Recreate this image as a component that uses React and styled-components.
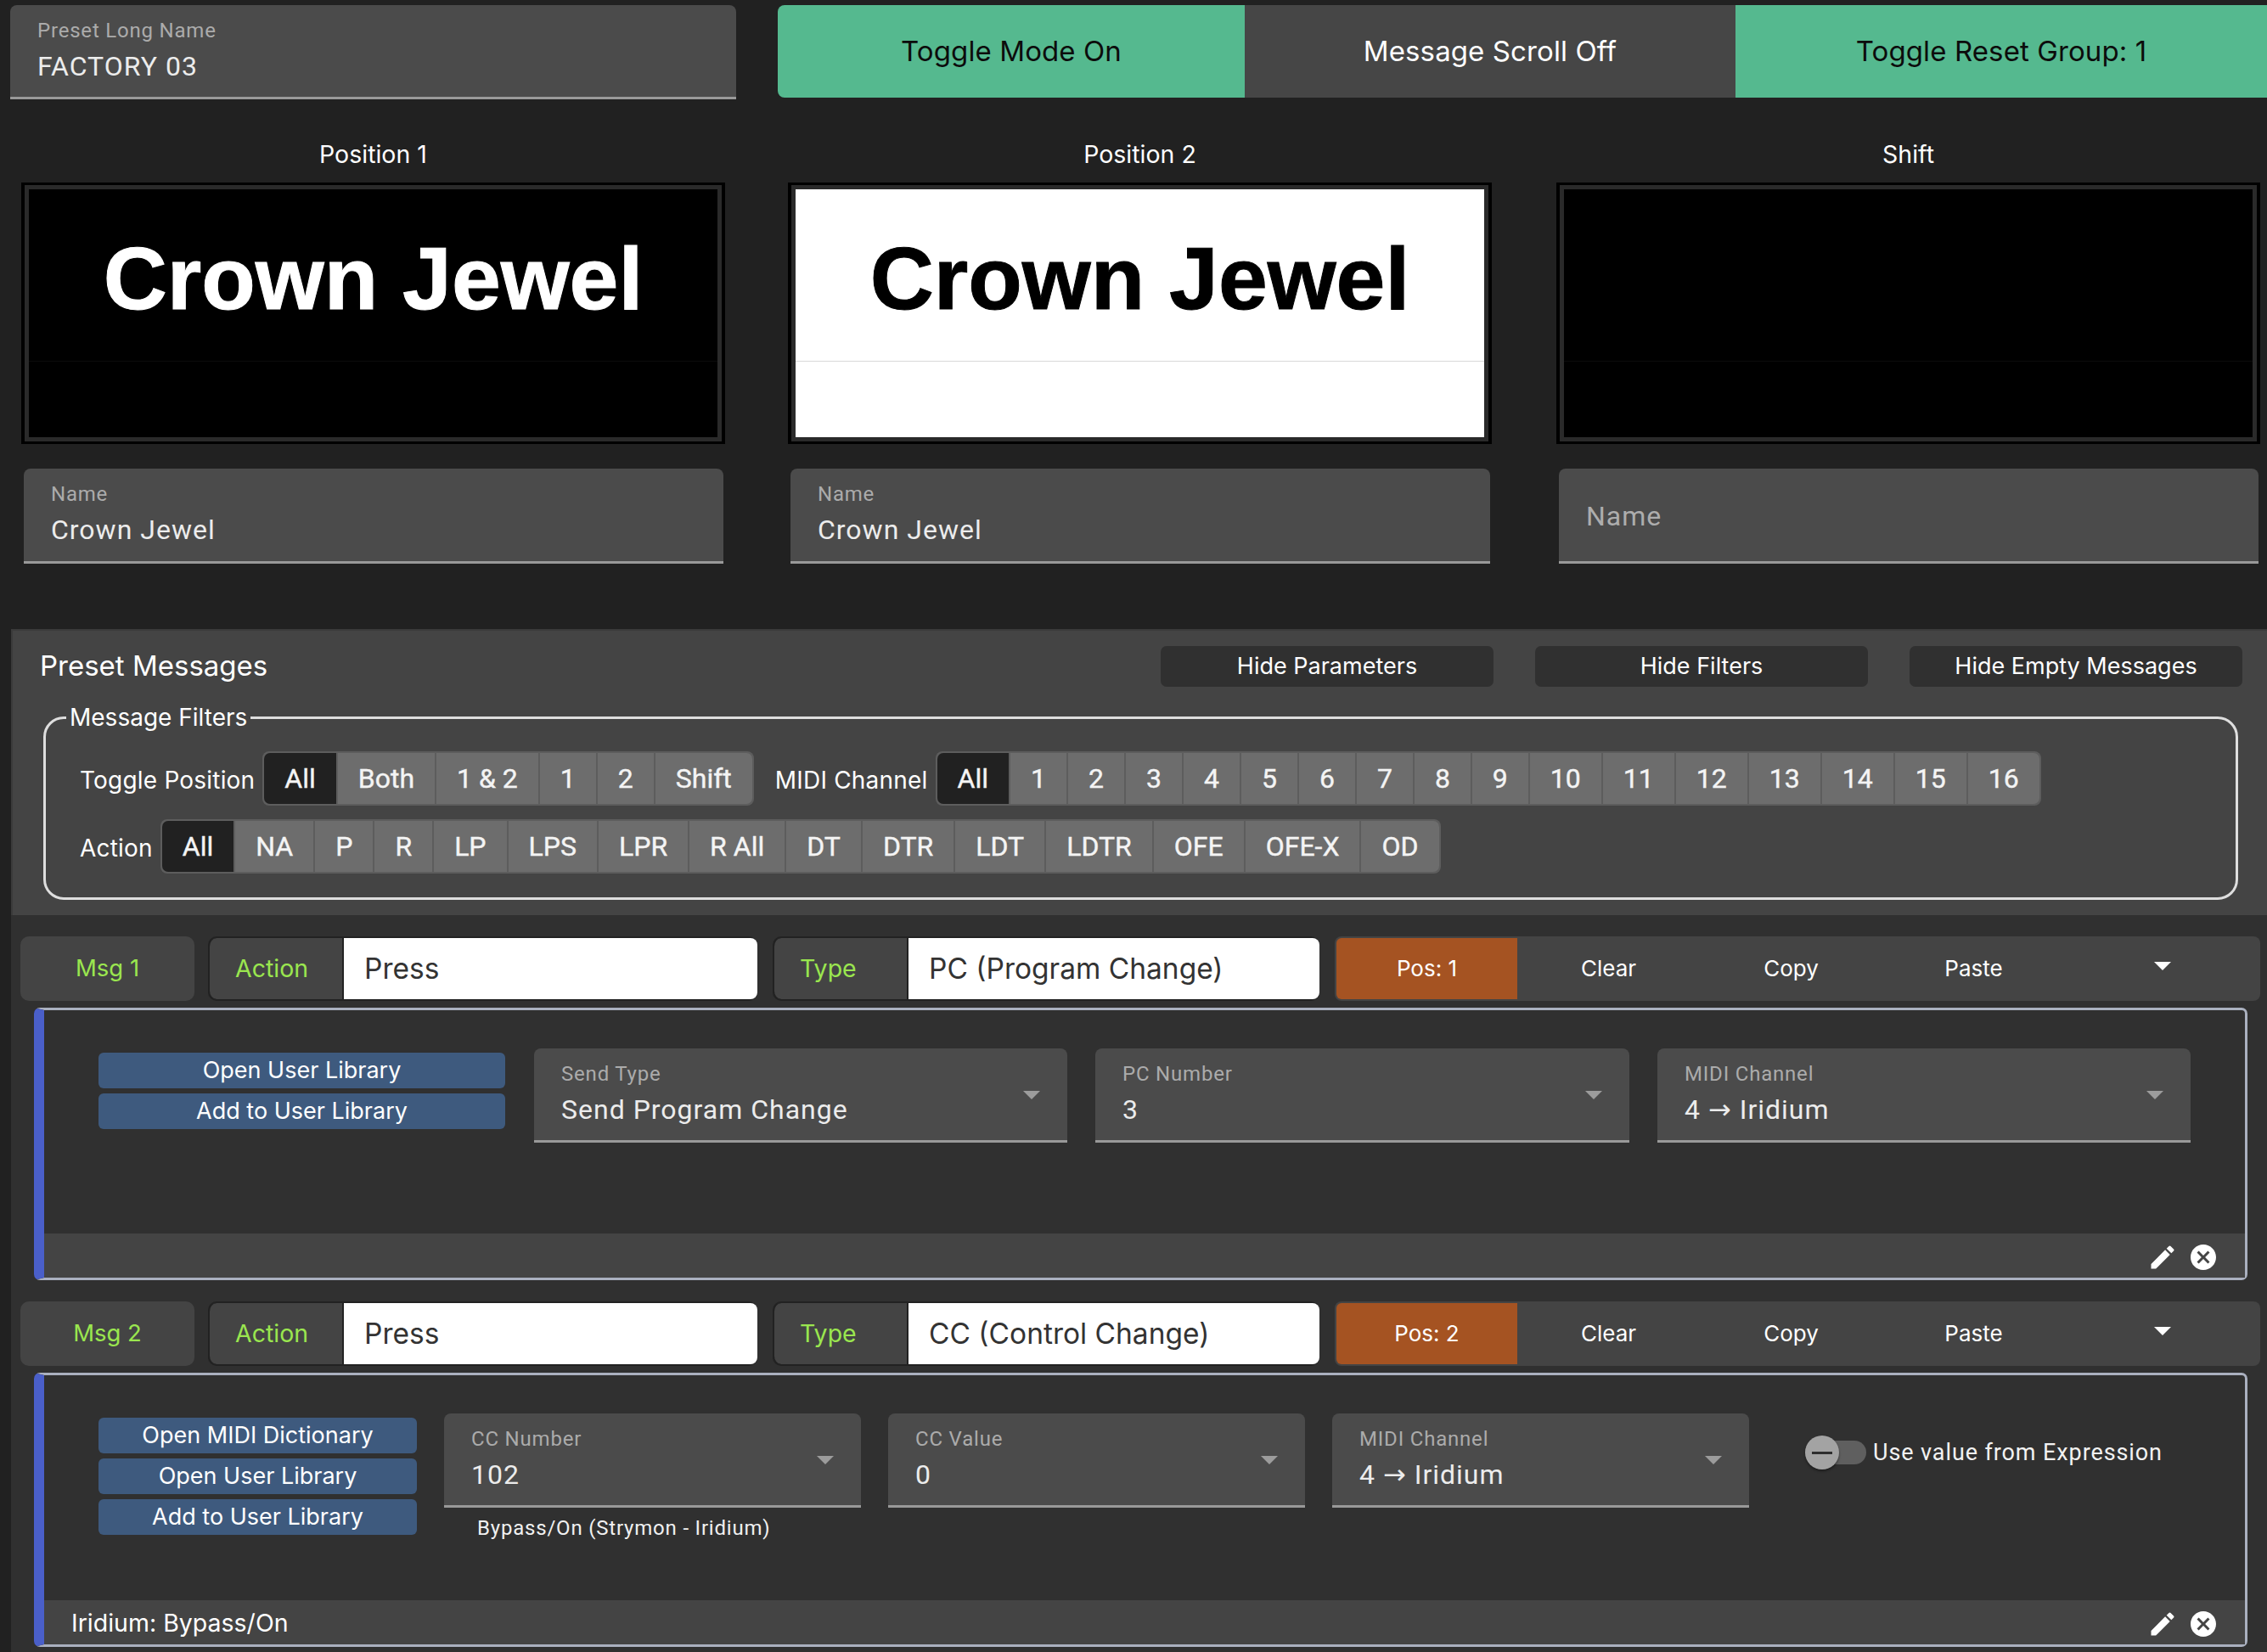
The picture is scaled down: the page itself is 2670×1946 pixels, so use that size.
import React from 'react';
import styled, { createGlobalStyle } from 'styled-components';

const GlobalStyle = createGlobalStyle`
  html, body {
    margin: 0;
    padding: 0;
    background: #212121;
  }
  * {
    box-sizing: border-box;
  }
`;

const uiFont = `Inter, "Liberation Sans", sans-serif`;
const fieldFont = `Roboto, "DejaVu Sans", sans-serif`;

const Page = styled.div`
  width: 2670px;
  height: 1946px;
  overflow: hidden;
  background: #212121;
  color: #fff;
  font-family: ${uiFont};
`;

const TopRow = styled.div`
  display: flex;
  padding: 6px 0 0 12px;
  gap: 49px;
`;

const Modes = styled.div`
  display: flex;
`;

const ModeButton = styled.div`
  display: flex;
  align-items: center;
  justify-content: center;
  width: ${p => p.$w}px;
  height: 109px;
  padding-bottom: 2px;
  font-size: 33px;
  letter-spacing: 0.1px;
  background: ${p => (p.$on ? '#55b98f' : '#464646')};
  color: ${p => (p.$on ? '#0c0c0c' : '#fff')};
  border-radius: ${p => (p.$first ? '8px 0 0 8px' : '0')};
`;

const Field = styled.div`
  display: flex;
  align-items: flex-start;
  justify-content: space-between;
  width: ${p => p.$w}px;
  height: ${p => p.$h || 111}px;
  padding: 16px 32px 0 32px;
  background: #4b4b4b;
  border-bottom: 3px solid #999;
  border-radius: 8px 8px 0 0;
  font-family: ${fieldFont};
`;

const FieldText = styled.div`
  display: flex;
  flex-direction: column;
  gap: 9px;
`;

const FieldLabel = styled.div`
  font-size: 24px;
  line-height: 28px;
  letter-spacing: 0.8px;
  color: #ababab;
`;

const FieldValue = styled.div`
  font-size: 32px;
  line-height: 38px;
  letter-spacing: 1px;
  color: #ececec;
`;

const Placeholder = styled.div`
  font-size: 32px;
  line-height: 38px;
  letter-spacing: 1px;
  color: #adadad;
  margin-top: 21px;
`;

const Caret = styled.span`
  width: 0;
  height: 0;
  margin: ${p => (p.$flat ? '0' : '34px 0 0 0')};
  border-left: 10px solid transparent;
  border-right: 10px solid transparent;
  border-top: 10px solid ${p => p.$color || '#9c9c9c'};
`;

const Displays = styled.div`
  display: grid;
  grid-template-columns: 903px 905px 829px;
  padding: 0 0 0 25px;
  margin-top: 49px;
`;

const DisplayCol = styled.div`
  display: flex;
  flex-direction: column;
  width: 829px;
`;

const DisplayTitle = styled.div`
  height: 32px;
  line-height: 32px;
  text-align: center;
  font-size: 28.5px;
  margin-bottom: 17px;
`;

const Screen = styled.div`
  height: 308px;
  padding: 5px;
  background: #2a2a2a;
  border-style: solid;
  border-color: #000;
  border-width: 3px 4px;
`;

const ScreenFace = styled.div`
  display: flex;
  flex-direction: column;
  height: 100%;
  background: ${p => (p.$light ? '#fff' : '#000')};
  color: ${p => (p.$light ? '#000' : '#fff')};
`;

const ScreenTop = styled.div`
  height: 203px;
  padding-top: 46px;
  text-align: center;
  font-family: "Liberation Sans", Arial, sans-serif;
  font-weight: 700;
  font-size: 104px;
  line-height: 118px;
  -webkit-text-stroke: 1px currentColor;
  border-bottom: 1px solid ${p => (p.$light ? '#d8d8d8' : '#0c0c0c')};
`;

const NameSlot = styled.div`
  padding: 29px 2px 0 3px;
`;

const Panel = styled.section`
  margin: 77px 0 0 13px;
  height: 337px;
  background: #444;
  border-top: 2px solid #3b3b3b;
  border-left: 2px solid #3b3b3b;
`;

const PanelHeader = styled.div`
  display: flex;
  align-items: center;
  height: 48px;
  margin-top: 18px;
  padding: 0 29px 0 32px;
`;

const PanelTitle = styled.div`
  font-size: 33px;
  margin: 0 auto 2px 0;
`;

const HideButton = styled.div`
  display: flex;
  align-items: center;
  justify-content: center;
  width: 392px;
  height: 48px;
  margin-left: 49px;
  padding-bottom: 2px;
  background: #303030;
  border-radius: 7px;
  font-size: 27px;
`;

const FilterBox = styled.fieldset`
  display: block;
  height: 232px;
  margin: 19px 34px 0 36px;
  padding: 23px 0 0 24px;
  border: 3px solid #dedede;
  border-radius: 24px;
`;

const FilterLegend = styled.legend`
  padding: 0 4px;
  height: 34px;
  line-height: 34px;
  font-size: 28px;
`;

const FilterRows = styled.div`
  display: flex;
  flex-direction: column;
  gap: 16px;
  padding-left: 16px;
`;

const FilterRow = styled.div`
  display: flex;
  align-items: center;
  height: 64px;
`;

const FilterLabel = styled.span`
  font-size: 28px;
  letter-spacing: 0.2px;
  margin: 4px 9px 0 ${p => p.$ml || 0}px;
  white-space: nowrap;
`;

const Group = styled.div`
  display: flex;
  height: 64px;
  padding: 2px;
  background: #5d5d5d;
  border-radius: 8px;
`;

const GroupButton = styled.div`
  display: flex;
  align-items: center;
  justify-content: center;
  padding: 0 24px;
  margin-left: ${p => (p.$first ? 0 : 2)}px;
  background: ${p => (p.$active ? '#212121' : '#6d6d6d')};
  border-radius: ${p => (p.$first ? '7px 0 0 7px' : p.$last ? '0 7px 7px 0' : '0')};
  font-family: ${fieldFont};
  font-size: 32px;
  font-weight: 400;
  -webkit-text-stroke: 0.4px currentColor;
  color: #f4f4f4;
  white-space: nowrap;
`;

const Messages = styled.div`
  margin-left: 13px;
  height: 868px;
  background: #303030;
  padding: 25px 0 0 11px;
`;

const MsgRow = styled.div`
  display: flex;
  height: 76px;
  margin-bottom: 8px;
`;

const MsgTag = styled.div`
  display: flex;
  align-items: center;
  justify-content: center;
  width: 205px;
  margin-right: 16px;
  padding-bottom: 2px;
  background: #444;
  border-radius: 10px;
  color: #9ae64f;
  font-size: 27.5px;
`;

const PickGroup = styled.div`
  display: flex;
  width: ${p => p.$w}px;
  margin-right: 18px;
  background: #222;
  padding: 2px 0;
  border-radius: 10px;
`;

const PickLabel = styled.div`
  display: flex;
  align-items: center;
  width: 160px;
  padding: 0 0 2px 30px;
  background: #444;
  border: 2px solid #222;
  border-width: 0 2px;
  border-radius: 10px 0 0 10px;
  color: #9ae64f;
  font-size: 28.5px;
`;

const PickValue = styled.div`
  display: flex;
  align-items: center;
  flex: 1;
  padding-left: 24px;
  background: #fff;
  border-radius: 0 8px 8px 0;
  color: #333;
  font-family: ${uiFont};
  font-size: 33.5px;
`;

const Toolbar = styled.div`
  display: flex;
  align-items: stretch;
  width: 1090px;
  padding: 2px 0 2px 2px;
  background: #444;
  border-radius: 8px;
`;

const PosTag = styled.div`
  display: flex;
  align-items: center;
  justify-content: center;
  width: 213px;
  padding-bottom: 2px;
  background: #a55322;
  border-radius: 6px 0 0 6px;
  font-size: 26px;
`;

const ToolButton = styled.div`
  display: flex;
  align-items: center;
  justify-content: center;
  width: 215px;
  padding-bottom: 2px;
  font-size: 26px;
`;

const ToolCaret = styled.div`
  display: flex;
  align-items: center;
  justify-content: center;
  flex: 1;
  padding-bottom: 6px;
`;

const Card = styled.div`
  display: flex;
  flex-direction: column;
  width: 2607px;
  height: ${p => p.$h}px;
  margin: 0 0 25px 16px;
  border: 3px solid #aab0bf;
  border-left: 12px solid #4a5fc9;
  border-radius: 7px;
`;

const CardBody = styled.div`
  display: flex;
  align-items: flex-start;
  flex: 1;
  padding: 45px 0 0 64px;
`;

const LibraryButtons = styled.div`
  display: flex;
  flex-direction: column;
  gap: 6px;
  width: ${p => p.$w}px;
  margin: 5px ${p => p.$gap}px 0 0;
`;

const LibraryButton = styled.div`
  display: flex;
  align-items: center;
  justify-content: center;
  height: 42px;
  padding-bottom: 2px;
  background: #3e5a7e;
  border-radius: 6px;
  font-size: 27px;
`;

const Fields = styled.div`
  display: flex;
  gap: ${p => p.$gap}px;
`;

const FieldCol = styled.div`
  display: flex;
  flex-direction: column;
`;

const Caption = styled.div`
  padding: 10px 0 0 39px;
  font-family: ${fieldFont};
  font-size: 24px;
  line-height: 28px;
  letter-spacing: 0.8px;
  color: #f0f0f0;
`;

const ExpressionToggle = styled.div`
  display: flex;
  align-items: center;
  margin: 30px 0 0 66px;
`;

const ToggleTrack = styled.div`
  position: relative;
  width: 72px;
  height: 28px;
  background: #5f5f5f;
  border-radius: 14px;
  margin-right: 8px;
`;

const ToggleKnob = styled.div`
  position: absolute;
  top: -6px;
  left: 0;
  display: flex;
  align-items: center;
  justify-content: center;
  width: 40px;
  height: 40px;
  background: #a3a3a3;
  border-radius: 50%;
  box-shadow: 0 2px 3px rgba(0, 0, 0, 0.4);

  &::after {
    content: '';
    width: 24px;
    height: 3px;
    background: #2e2e2e;
  }
`;

const ToggleLabel = styled.span`
  font-family: ${fieldFont};
  font-size: 27px;
  letter-spacing: 0.9px;
  color: #f2f2f2;
`;

const CardFooter = styled.div`
  display: flex;
  align-items: center;
  height: 52px;
  padding: 3px 31px 0 32px;
  background: #444;
`;

const FooterText = styled.span`
  font-size: 28.5px;
  margin: 0 auto 2px 0;
`;

const FooterIcon = styled.svg`
  width: 36px;
  height: 36px;
  margin-left: 12px;
  fill: #fff;
`;

const positionFilters = ['All', 'Both', '1 & 2', '1', '2', 'Shift'];
const channelFilters = ['All', ...Array.from({ length: 16 }, (_, i) => String(i + 1))];
const actionFilters = ['All', 'NA', 'P', 'R', 'LP', 'LPS', 'LPR', 'R All', 'DT', 'DTR', 'LDT', 'LDTR', 'OFE', 'OFE-X', 'OD'];

function FilterGroup({ options }) {
  return (
    <Group>
      {options.map((option, i) => (
        <GroupButton key={option} $first={i === 0} $last={i === options.length - 1} $active={i === 0}>
          {option}
        </GroupButton>
      ))}
    </Group>
  );
}

function SelectField({ label, value, w }) {
  return (
    <Field $w={w}>
      <FieldText>
        <FieldLabel>{label}</FieldLabel>
        <FieldValue>{value}</FieldValue>
      </FieldText>
      <Caret />
    </Field>
  );
}

function DisplayColumn({ title, name, light }) {
  return (
    <DisplayCol>
      <DisplayTitle>{title}</DisplayTitle>
      <Screen>
        <ScreenFace $light={light}>
          <ScreenTop $light={light}>{name}</ScreenTop>
        </ScreenFace>
      </Screen>
      <NameSlot>
        <Field $w={824} $h={112}>
          {name ? (
            <FieldText>
              <FieldLabel>Name</FieldLabel>
              <FieldValue>{name}</FieldValue>
            </FieldText>
          ) : (
            <Placeholder>Name</Placeholder>
          )}
        </Field>
      </NameSlot>
    </DisplayCol>
  );
}

function MessageHeader({ tag, type, pos }) {
  return (
    <MsgRow>
      <MsgTag>{tag}</MsgTag>
      <PickGroup $w={647}>
        <PickLabel>Action</PickLabel>
        <PickValue>Press</PickValue>
      </PickGroup>
      <PickGroup $w={644}>
        <PickLabel>Type</PickLabel>
        <PickValue>{type}</PickValue>
      </PickGroup>
      <Toolbar>
        <PosTag>{pos}</PosTag>
        <ToolButton>Clear</ToolButton>
        <ToolButton>Copy</ToolButton>
        <ToolButton>Paste</ToolButton>
        <ToolCaret>
          <Caret $color="#fff" $flat />
        </ToolCaret>
      </Toolbar>
    </MsgRow>
  );
}

function MessageFooter({ text }) {
  return (
    <CardFooter>
      <FooterText>{text}</FooterText>
      <FooterIcon viewBox="0 0 24 24">
        <path d="M3 17.25V21h3.75L17.81 9.94l-3.75-3.75L3 17.25zM20.71 7.04c.39-.39.39-1.02 0-1.41l-2.34-2.34a.9959.9959 0 00-1.41 0l-1.83 1.83 3.75 3.75 1.83-1.83z" />
      </FooterIcon>
      <FooterIcon viewBox="0 0 24 24">
        <path d="M12 2C6.47 2 2 6.47 2 12s4.47 10 10 10 10-4.47 10-10S17.53 2 12 2zm5 13.59L15.59 17 12 13.41 8.41 17 7 15.59 10.59 12 7 8.41 8.41 7 12 10.59 15.59 7 17 8.41 13.41 12 17 15.59z" />
      </FooterIcon>
    </CardFooter>
  );
}

function App() {
  return (
    <Page>
      <GlobalStyle />
      <TopRow>
        <Field $w={855}>
          <FieldText>
            <FieldLabel>Preset Long Name</FieldLabel>
            <FieldValue>FACTORY 03</FieldValue>
          </FieldText>
        </Field>
        <Modes>
          <ModeButton $w={550} $on $first>Toggle Mode On</ModeButton>
          <ModeButton $w={578}>Message Scroll Off</ModeButton>
          <ModeButton $w={626} $on>Toggle Reset Group: 1</ModeButton>
        </Modes>
      </TopRow>

      <Displays>
        <DisplayColumn title="Position 1" name="Crown Jewel" />
        <DisplayColumn title="Position 2" name="Crown Jewel" light />
        <DisplayColumn title="Shift" />
      </Displays>

      <Panel>
        <PanelHeader>
          <PanelTitle>Preset Messages</PanelTitle>
          <HideButton>Hide Parameters</HideButton>
          <HideButton>Hide Filters</HideButton>
          <HideButton>Hide Empty Messages</HideButton>
        </PanelHeader>
        <FilterBox>
          <FilterLegend>Message Filters</FilterLegend>
          <FilterRows>
            <FilterRow>
              <FilterLabel>Toggle Position</FilterLabel>
              <FilterGroup options={positionFilters} />
              <FilterLabel $ml={25}>MIDI Channel</FilterLabel>
              <FilterGroup options={channelFilters} />
            </FilterRow>
            <FilterRow>
              <FilterLabel>Action</FilterLabel>
              <FilterGroup options={actionFilters} />
            </FilterRow>
          </FilterRows>
        </FilterBox>
      </Panel>

      <Messages>
        <MessageHeader tag="Msg 1" type="PC (Program Change)" pos="Pos: 1" />
        <Card $h={321}>
          <CardBody>
            <LibraryButtons $w={479} $gap={34}>
              <LibraryButton>Open User Library</LibraryButton>
              <LibraryButton>Add to User Library</LibraryButton>
            </LibraryButtons>
            <Fields $gap={33}>
              <SelectField w={628} label="Send Type" value="Send Program Change" />
              <SelectField w={629} label="PC Number" value="3" />
              <SelectField w={628} label="MIDI Channel" value="4 → Iridium" />
            </Fields>
          </CardBody>
          <MessageFooter />
        </Card>

        <MessageHeader tag="Msg 2" type="CC (Control Change)" pos="Pos: 2" />
        <Card $h={323}>
          <CardBody>
            <LibraryButtons $w={375} $gap={32}>
              <LibraryButton>Open MIDI Dictionary</LibraryButton>
              <LibraryButton>Open User Library</LibraryButton>
              <LibraryButton>Add to User Library</LibraryButton>
            </LibraryButtons>
            <Fields $gap={32}>
              <FieldCol>
                <SelectField w={491} label="CC Number" value="102" />
                <Caption>Bypass/On (Strymon - Iridium)</Caption>
              </FieldCol>
              <SelectField w={491} label="CC Value" value="0" />
              <SelectField w={491} label="MIDI Channel" value="4 → Iridium" />
            </Fields>
            <ExpressionToggle>
              <ToggleTrack>
                <ToggleKnob />
              </ToggleTrack>
              <ToggleLabel>Use value from Expression</ToggleLabel>
            </ExpressionToggle>
          </CardBody>
          <MessageFooter text="Iridium: Bypass/On" />
        </Card>
      </Messages>
    </Page>
  );
}

export default App;
